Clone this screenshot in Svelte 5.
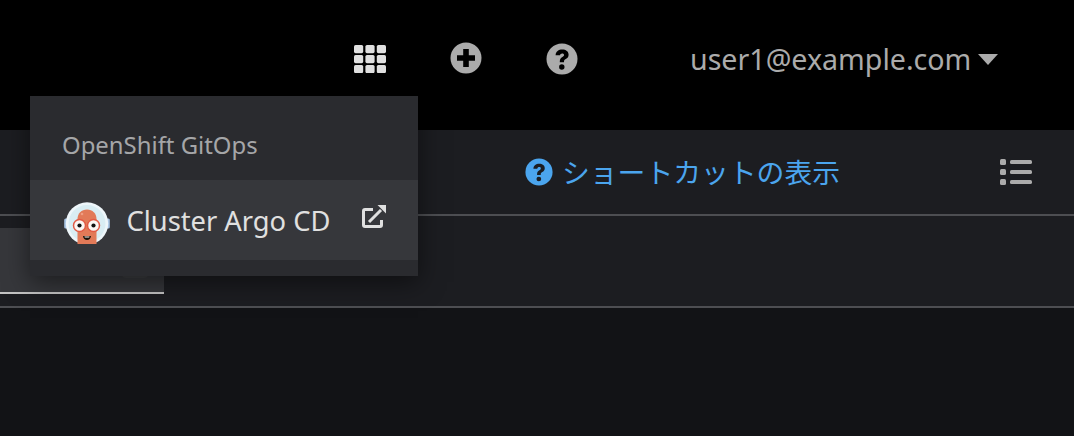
<script>
  const dots = [0, 1, 2, 3, 4, 5, 6, 7, 8];
</script>

<div class="page">
  <header class="masthead">
    <button class="icon-btn apps" aria-label="アプリケーションランチャー">
      <svg width="32" height="28" viewBox="0 0 32 28">
        {#each dots as d}
          <rect x={(d % 3) * 11.4} y={Math.floor(d / 3) * 10} width="9.2" height="8.2" rx="1.6" fill="#e0e0e0" />
        {/each}
      </svg>
    </button>
    <button class="icon-btn plus" aria-label="インポート">
      <svg width="32" height="32" viewBox="0 0 32 32">
        <circle cx="16" cy="16" r="15.5" fill="#ababab" />
        <path d="M13.2 7h5.6v6.2H25v5.6h-6.2V25h-5.6v-6.2H7v-5.6h6.2z" fill="#000" />
      </svg>
    </button>
    <button class="icon-btn help" aria-label="ヘルプ">
      <svg width="32" height="32" viewBox="0 0 32 32">
        <circle cx="16" cy="16" r="15.5" fill="#ababab" />
        <path d="M9.6 12.2c.2-3.6 3-5.6 6.6-5.6 3.7 0 6.4 2 6.4 5.1 0 2.2-1.2 3.4-2.8 4.4-1.3.8-1.8 1.3-1.8 2.6v.6h-4.2v-.9c0-2.1.9-3.2 2.6-4.3 1-.7 1.7-1.2 1.7-2.1 0-1-.8-1.6-1.9-1.6-1.2 0-2 .7-2.2 1.9z" fill="#000" />
        <circle cx="15.8" cy="24" r="2.7" fill="#000" />
      </svg>
    </button>
    <button class="user">
      <span>user1@example.com</span>
      <svg width="20" height="11" viewBox="0 0 20 11"><path d="M0 0h20L10 11z" fill="#ababab" /></svg>
    </button>
  </header>

  <section class="toolbar">
    <a class="shortcuts" href="#top">
      <svg width="28" height="28" viewBox="0 0 32 32">
        <circle cx="16" cy="16" r="15.5" fill="#4ba5ee" />
        <path d="M9.6 12.2c.2-3.6 3-5.6 6.6-5.6 3.7 0 6.4 2 6.4 5.1 0 2.2-1.2 3.4-2.8 4.4-1.3.8-1.8 1.3-1.8 2.6v.6h-4.2v-.9c0-2.1.9-3.2 2.6-4.3 1-.7 1.7-1.2 1.7-2.1 0-1-.8-1.6-1.9-1.6-1.2 0-2 .7-2.2 1.9z" fill="#1c1d21" />
        <circle cx="15.8" cy="24" r="2.7" fill="#1c1d21" />
      </svg>
      <span>ショートカットの表示</span>
    </a>
    <button class="icon-btn list" aria-label="一覧">
      <svg width="32" height="26" viewBox="0 0 32 26">
        {#each [0, 1, 2] as r}
          <rect x="0" y={r * 10} width="6" height="6" rx="1.5" fill="#ababab" />
          <rect x="10" y={r * 10 + 1} width="22" height="4" rx="1.6" fill="#ababab" />
        {/each}
      </svg>
    </button>
  </section>

  <section class="tabs">
    <div class="tab"></div>
  </section>

  <main class="content"></main>

  <div class="peek"></div>

  <div class="menu">
    <div class="group-title">OpenShift GitOps</div>
    <a class="item" href="#top">
      <svg class="logo" width="46" height="42" viewBox="0 0 46 42">
        <rect x="0.2" y="16.500" width="4" height="10" rx="1.500" fill="#a9c5e4" />
        <rect x="41.800" y="16.500" width="4" height="10" rx="1.500" fill="#a9c5e4" />
        <circle cx="23" cy="21.500" r="21.200" fill="#eef6fa" />
        <circle cx="23" cy="21.500" r="18.500" fill="#d9edf3" />
        <path d="M13.500 42V17c0-5.500 4-9.500 9.500-9.500s9.500 4 9.500 9.500v25z" fill="#e27a58" />
        <circle cx="15.500" cy="23.500" r="6" fill="#fbf6f3" stroke="#e25a45" stroke-width="1.500" />
        <circle cx="29.500" cy="23.500" r="6" fill="#fbf6f3" stroke="#e25a45" stroke-width="1.500" />
        <circle cx="15.500" cy="23.500" r="2.100" fill="#111" />
        <circle cx="29.500" cy="23.500" r="2.100" fill="#111" />
        <path d="M19 34h8c-.4 2.800-1.800 4-4 4s-3.600-1.200-4-4z" fill="#1a1208" />
        <path d="M20.400 34.400h5.200l-.4 1.200h-4.400z" fill="#fff" />
        <circle cx="18" cy="12" r="1.300" fill="#ef9d82" />
      </svg>
      <span class="label">Cluster Argo CD</span>
      <svg class="ext" width="26" height="26" viewBox="0 0 26 26">
        <path d="M12 5.500H4a1.500 1.500 0 0 0-1.500 1.500v14a1.500 1.500 0 0 0 1.500 1.500h15a1.500 1.500 0 0 0 1.500-1.500v-5" fill="none" stroke="#e0e0e0" stroke-width="3" />
        <path d="M8 18 20 6" fill="none" stroke="#e0e0e0" stroke-width="3" />
        <path d="M16.500 1H25v8.500z" fill="#e0e0e0" />
      </svg>
    </a>
  </div>
</div>

<style>
  :global(body) {
    margin: 0;
    background: #121316;
  }
  .page {
    position: relative;
    width: 1074px;
    height: 436px;
    overflow: hidden;
    display: flex;
    flex-direction: column;
    font-family: "Noto Sans", "Noto Sans CJK JP", sans-serif;
  }
  button {
    background: none;
    border: 0;
    padding: 0;
    font: inherit;
    display: flex;
    align-items: center;
  }
  a {
    text-decoration: none;
  }
  .masthead {
    height: 130px;
    flex: none;
    background: #000;
    display: flex;
    align-items: flex-start;
    padding: 43px 0 0 354px;
    box-sizing: border-box;
  }
  .apps {
    margin-top: 2px;
  }
  .plus {
    margin-left: 64px;
    margin-top: -1px;
  }
  .help {
    margin-left: 64px;
    margin-top: 0;
  }
  .user {
    margin-left: 112px;
    margin-top: -3px;
    gap: 7px;
    color: #ababab;
    font-size: 28.6px;
    line-height: 38px;
  }
  .toolbar {
    height: 84px;
    flex: none;
    box-sizing: border-box;
    background: #1c1d21;
    display: flex;
    align-items: center;
    padding-left: 525px;
  }
  .shortcuts {
    display: flex;
    align-items: center;
    gap: 9px;
    color: #4ba5ee;
    font-size: 27.8px;
    line-height: 36px;
    margin-top: -1px;
  }
  .list {
    margin-left: auto;
    margin-right: 42px;
  }
  .tabs {
    height: 94px;
    flex: none;
    box-sizing: border-box;
    background: #1c1d21;
    border-top: 2px solid #4d4e52;
    border-bottom: 2px solid #4d4e52;
    padding-top: 12px;
  }
  .tab {
    width: 164px;
    height: 66px;
    box-sizing: border-box;
    background: #36373b;
    border-bottom: 2px solid #c4c4c4;
  }
  .content {
    flex: 1;
    background: #121316;
  }
  .peek {
    position: absolute;
    left: 122px;
    top: 270px;
    width: 26px;
    height: 8px;
    border-radius: 4px;
    background: #3d3e42;
  }
  .menu {
    position: absolute;
    left: 30px;
    top: 96px;
    width: 388px;
    height: 180px;
    background: #2a2b2f;
    box-shadow: 0 6px 24px rgba(0, 0, 0, 0.5);
  }
  .group-title {
    height: 84px;
    box-sizing: border-box;
    padding: 33px 0 0 32px;
    font-size: 23.9px;
    line-height: 32px;
    color: #a5a6a8;
  }
  .item {
    height: 80px;
    background: #36373b;
    display: flex;
    align-items: center;
    padding-left: 33.500px;
    color: #e0e0e0;
  }
  .logo {
    flex: none;
    margin-top: 6px;
  }
  .label {
    margin-left: 17px;
    margin-top: 2px;
    font-size: 27.3px;
    line-height: 36px;
  }
  .ext {
    position: absolute;
    left: 331px;
    top: 108px;
  }
</style>
